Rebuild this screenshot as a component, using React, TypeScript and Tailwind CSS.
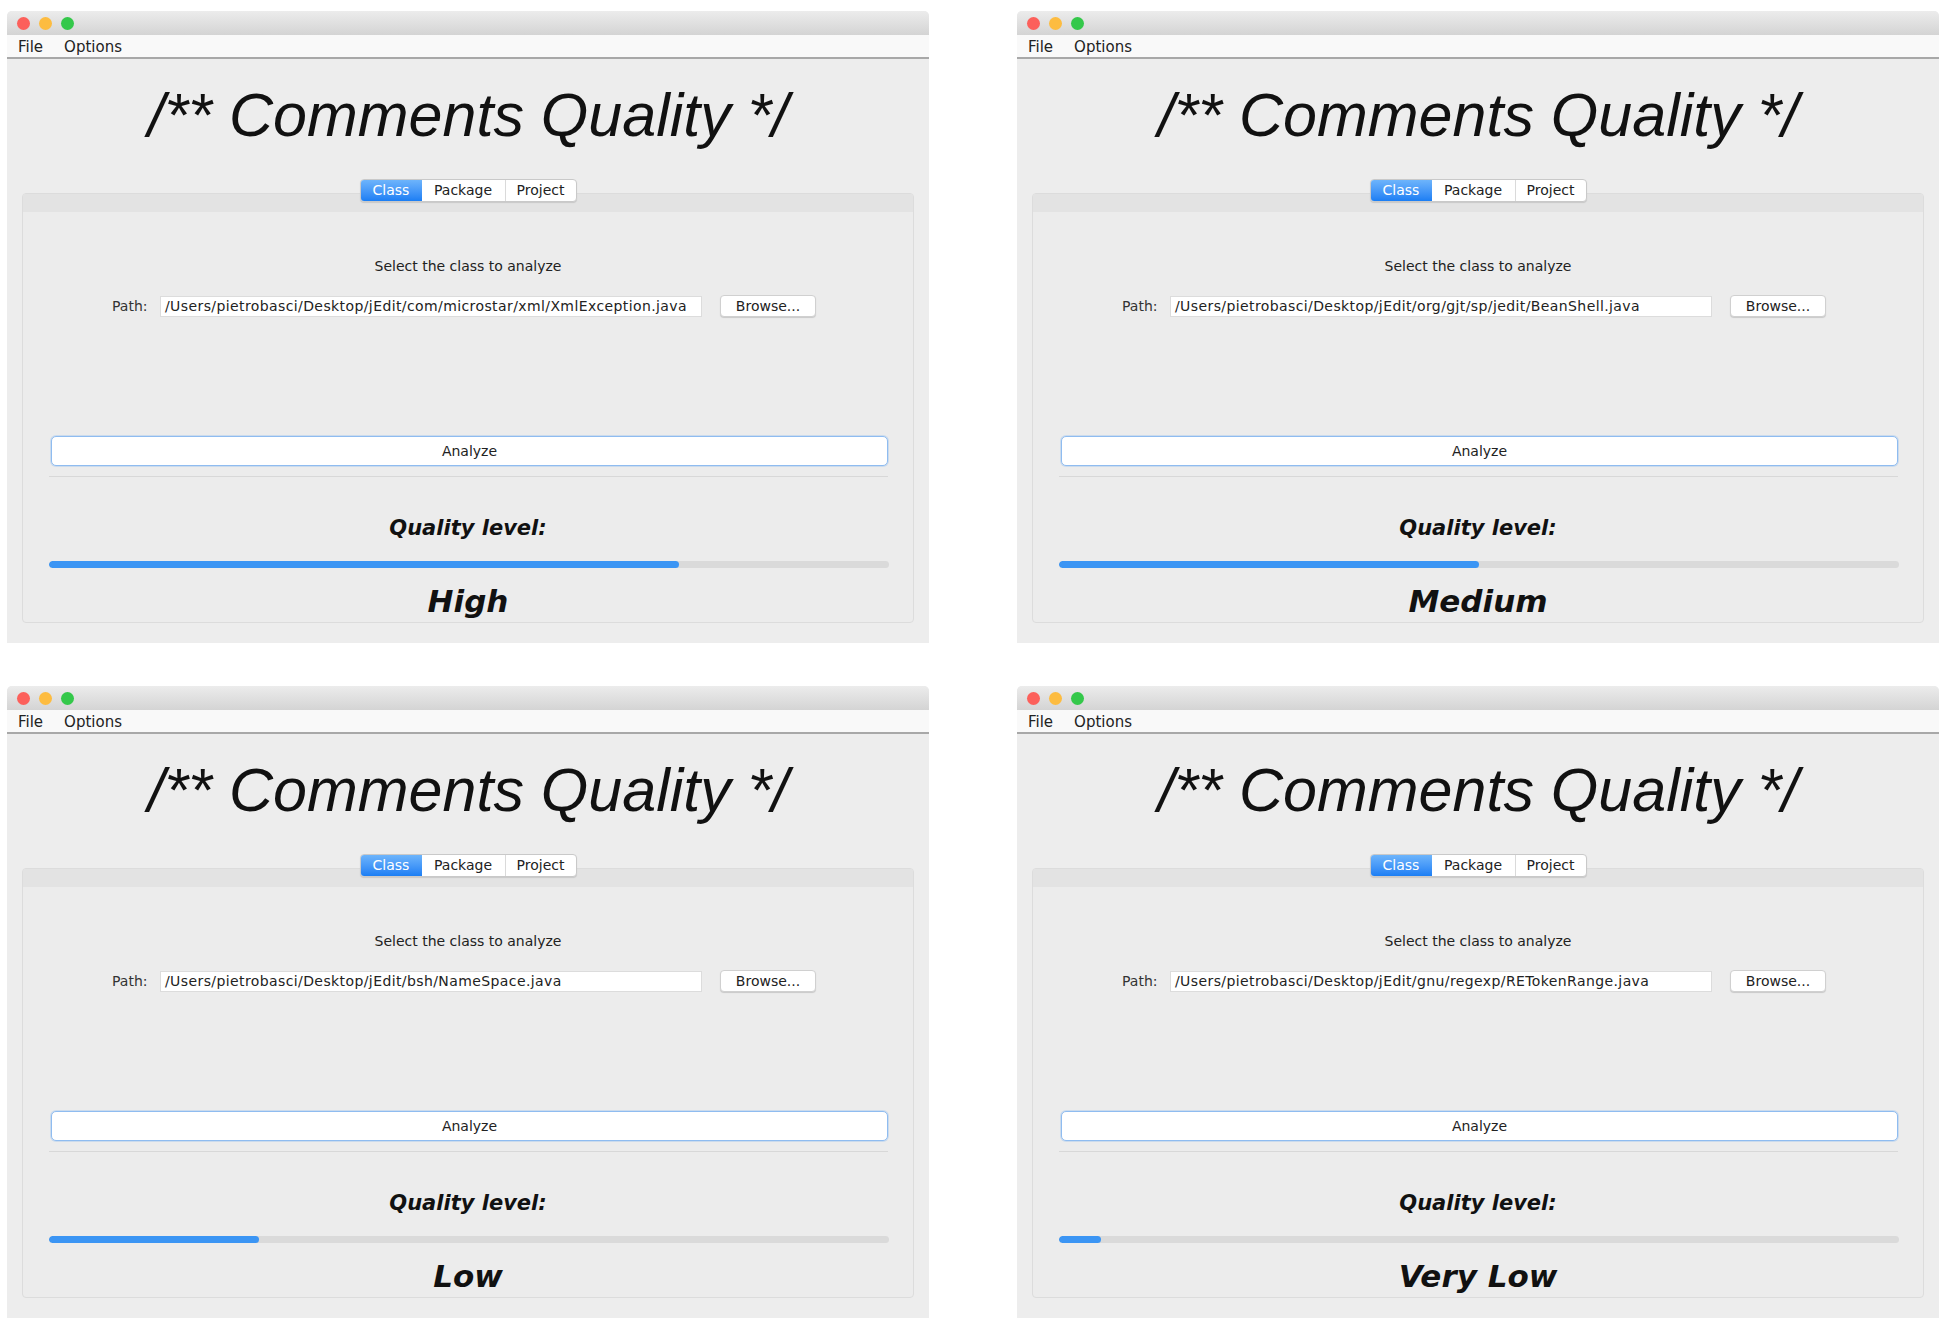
import React from 'react';

const WINDOWS = [
  { path: '/Users/pietrobasci/Desktop/jEdit/com/microstar/xml/XmlException.java', value: 75, level: 'High' },
  { path: '/Users/pietrobasci/Desktop/jEdit/org/gjt/sp/jedit/BeanShell.java', value: 50, level: 'Medium' },
  { path: '/Users/pietrobasci/Desktop/jEdit/bsh/NameSpace.java', value: 25, level: 'Low' },
  { path: '/Users/pietrobasci/Desktop/jEdit/gnu/regexp/RETokenRange.java', value: 5, level: 'Very Low' },
];

const ui = { fontFamily: '"DejaVu Sans", "Liberation Sans", sans-serif' };

const QualityWindow: React.FC<{ path: string; value: number; level: string }> = ({ path, value, level }) => (
  <div className="w-[922px] h-[632px] flex flex-col bg-[#ededed] rounded-t-[5px] overflow-hidden" style={ui}>
    {/* Title bar */}
    <div className="h-[24px] flex items-center gap-[9px] pl-[10px] bg-gradient-to-b from-[#ececec] to-[#d4d4d4]">
      <span className="w-[13px] h-[13px] rounded-full bg-[#fc605b]" />
      <span className="w-[13px] h-[13px] rounded-full bg-[#fdbc40]" />
      <span className="w-[13px] h-[13px] rounded-full bg-[#34c84a]" />
    </div>
    {/* Menu bar */}
    <div className="h-[24px] flex items-center gap-[21px] pl-[11px] pt-[3px] bg-[#f9f9f9] border-b-2 border-[#a8a8a8] text-[15px] text-[#222]">
      <span>File</span>
      <span>Options</span>
    </div>

    {/* Heading */}
    <div
      className="mt-[25px] text-center text-[61px] leading-[62px] italic text-[#111]"
      style={{ fontFamily: '"Liberation Sans", Arial, sans-serif' }}
    >
      /** Comments Quality */
    </div>

    {/* Tabs */}
    <div className="mt-[33px] relative z-10 flex justify-center">
      <div className="flex h-[23px] rounded-[4px] border border-[#c9c9c9] bg-white shadow-[0_1px_1px_rgba(0,0,0,0.12)] text-[14px] overflow-hidden">
        <div className="w-[61px] flex items-center justify-center bg-gradient-to-b from-[#6db4fb] to-[#1a7ef4] text-white">Class</div>
        <div className="w-[84px] flex items-center justify-center border-r border-[#dadada] text-[#222]">Package</div>
        <div className="w-[70px] flex items-center justify-center text-[#222]">Project</div>
      </div>
    </div>

    {/* Tab panel */}
    <div className="-mt-[9px] mx-[15px] mb-[20px] flex-1 flex flex-col rounded-[4px] border border-[#dcdcdc] bg-[#ececec] overflow-hidden">
      <div className="h-[18px] bg-[#e3e3e3]" />
      <div className="flex-1 flex flex-col">
        <div className="mt-[46px] text-center text-[14px] leading-[17px] text-[#222]">Select the class to analyze</div>

        <div className="mt-[20px] pr-[8px] flex items-center justify-center text-[14px] text-[#333]">
          <span className="w-[48px]">Path:</span>
          <div className="w-[542px] h-[21px] flex items-center px-[4px] bg-white border border-[#dcdcdc] text-[#222] tracking-[0.4px] overflow-hidden whitespace-nowrap">
            {path}
          </div>
          <div className="ml-[18px] w-[96px] h-[22px] flex items-center justify-center bg-white rounded-[4px] border border-[#d0d0d0] shadow-[0_1px_1px_rgba(0,0,0,0.15)] text-[#222]">
            Browse...
          </div>
        </div>

        <div className="mt-[119px] ml-[28px] mr-[25px] h-[30px] flex items-center justify-center bg-white rounded-[5px] border border-[#8fbcf0] shadow-[0_0_0_1px_rgba(143,188,240,0.35)] text-[14px] text-[#222]">
          Analyze
        </div>
        <div className="mt-[10px] ml-[26px] mr-[25px] h-px bg-[#d8d8d8]" />

        <div className="mt-[39px] text-center text-[21px] leading-[25px] font-bold italic text-[#111]">Quality level:</div>

        <div className="mt-[20px] ml-[26px] mr-[24px] h-[7px] rounded-full bg-[#dadada] overflow-hidden">
          <div className="h-full rounded-full bg-[#3b95f4]" style={{ width: `${value}%` }} />
        </div>

        <div className="mt-[15px] text-center text-[31px] leading-[36px] font-bold italic text-[#111]">{level}</div>
      </div>
    </div>
  </div>
);

const App: React.FC = () => (
  <div className="w-[1945px] h-[1330px] bg-white pl-[7px] pt-[11px]">
    <div className="grid grid-cols-[922px_922px] gap-x-[88px] gap-y-[43px]">
      {WINDOWS.map(w => (
        <QualityWindow key={w.level} path={w.path} value={w.value} level={w.level} />
      ))}
    </div>
  </div>
);

export default App;
